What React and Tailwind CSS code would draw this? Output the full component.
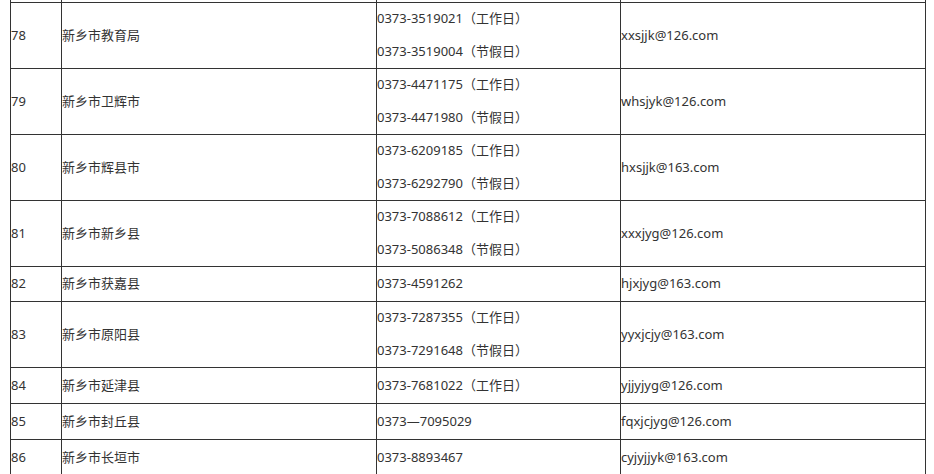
import React from "react";

const rows = [
  { no: "78", name: "新乡市教育局", phones: ["0373-3519021（工作日）", "0373-3519004（节假日）"], mail: "xxsjjk@126.com", h: "h-[66px]" },
  { no: "79", name: "新乡市卫辉市", phones: ["0373-4471175（工作日）", "0373-4471980（节假日）"], mail: "whsjyk@126.com", h: "h-[66px]" },
  { no: "80", name: "新乡市辉县市", phones: ["0373-6209185（工作日）", "0373-6292790（节假日）"], mail: "hxsjjk@163.com", h: "h-[66px]" },
  { no: "81", name: "新乡市新乡县", phones: ["0373-7088612（工作日）", "0373-5086348（节假日）"], mail: "xxxjyg@126.com", h: "h-[66px]" },
  { no: "82", name: "新乡市获嘉县", phones: ["0373-4591262"], mail: "hjxjyg@163.com", h: "h-[35px]" },
  { no: "83", name: "新乡市原阳县", phones: ["0373-7287355（工作日）", "0373-7291648（节假日）"], mail: "yyxjcjy@163.com", h: "h-[66px]" },
  { no: "84", name: "新乡市延津县", phones: ["0373-7681022（工作日）"], mail: "yjjyjyg@126.com", h: "h-[36px]" },
  { no: "85", name: "新乡市封丘县", phones: ["0373—7095029"], mail: "fqxjcjyg@126.com", h: "h-[36px]" },
  { no: "86", name: "新乡市长垣市", phones: ["0373-8893467"], mail: "cyjyjjyk@163.com", h: "h-[36px]" },
];

const cell = "border-l border-t border-[#333] flex flex-col justify-center pb-[2px]";

export default function App() {
  return (
    <div
      className="w-[934px] h-[474px] overflow-hidden bg-white pl-[10px] text-[13px] leading-[20px] text-[#333]"
      style={{ fontFamily: '"Noto Sans", "Noto Sans CJK SC", sans-serif' }}
    >
      <div className="flex h-[2px]">
        <div className="w-[51px] border-l border-[#333]" />
        <div className="w-[315px] border-l border-[#333]" />
        <div className="w-[244px] border-l border-[#333]" />
        <div className="w-[306px] border-l border-r border-[#333]" />
      </div>
      {rows.map((r) => (
        <div key={r.no} className={`flex ${r.h}`}>
          <div className={`${cell} w-[51px]`}>{r.no}</div>
          <div className={`${cell} w-[315px]`}>{r.name}</div>
          <div className={`${cell} w-[244px] gap-[13px]`}>
            {r.phones.map((p) => (
              <div key={p}>{p}</div>
            ))}
          </div>
          <div className={`${cell} w-[306px] border-r`}>{r.mail}</div>
        </div>
      ))}
    </div>
  );
}
